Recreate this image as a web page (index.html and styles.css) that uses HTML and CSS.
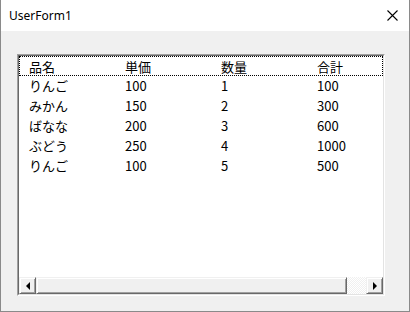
FILE: index.html
```html
<!DOCTYPE html>
<html lang="ja">
<head>
    <meta charset="UTF-8">
    <title>UserForm1</title>
    <link rel="stylesheet" href="styles.css">
</head>
<body>
    <div class="window">
        <div class="titlebar">
            <span class="title">UserForm1</span>
            <span class="close">
                <svg width="11" height="11" viewBox="0 0 11 11">
                    <path d="M0.5 0.5 L10.5 10.5 M10.5 0.5 L0.5 10.5" stroke="#000" stroke-width="1.1" fill="none"/>
                </svg>
            </span>
        </div>
        <div class="client">
            <div class="listbox">
                <div class="listbox-inner">
                    <div class="row header">
                        <span>品名</span><span>単価</span><span>数量</span><span>合計</span>
                    </div>
                    <div class="row"><span>りんご</span><span>100</span><span>1</span><span>100</span></div>
                    <div class="row"><span>みかん</span><span>150</span><span>2</span><span>300</span></div>
                    <div class="row"><span>ばなな</span><span>200</span><span>3</span><span>600</span></div>
                    <div class="row"><span>ぶどう</span><span>250</span><span>4</span><span>1000</span></div>
                    <div class="row"><span>りんご</span><span>100</span><span>5</span><span>500</span></div>
                    <div class="spacer"></div>
                    <div class="hscroll">
                        <div class="sbtn"><span class="arrow-left"></span></div>
                        <div class="thumb"></div>
                        <div class="track"></div>
                        <div class="sbtn"><span class="arrow-right"></span></div>
                    </div>
                </div>
            </div>
        </div>
    </div>
</body>
</html>
```

FILE: styles.css
```css
* {
    box-sizing: border-box;
}

body {
    margin: 0;
    width: 410px;
    height: 312px;
    overflow: hidden;
    font-family: "Noto Sans", "Noto Sans CJK JP", sans-serif;
}

.window {
    width: 410px;
    height: 312px;
    display: flex;
    flex-direction: column;
    border: 1px solid #8a8a8a;
    border-top: none;
    background-color: #f0f0f0;
}

.titlebar {
    height: 31px;
    display: flex;
    align-items: center;
    justify-content: space-between;
    background-color: #fff;
    padding: 0 10px 0 8px;
}

.title {
    font-size: 12px;
    color: #000;
}

.close {
    display: flex;
    margin-right: 1px;
}

.client {
    flex: 1;
    padding: 23px 0 0 16px;
}

.listbox {
    width: 368px;
    height: 242px;
    border: 1px solid;
    border-color: #a0a0a0 #fff #fff #a0a0a0;
}

.listbox-inner {
    height: 100%;
    display: flex;
    flex-direction: column;
    background-color: #fff;
    border: 1px solid;
    border-color: #696969 #e3e3e3 #e3e3e3 #696969;
}

.row {
    height: 20px;
    display: grid;
    grid-template-columns: 96px 96px 96px 1fr;
    align-items: center;
    padding-left: 10px;
    font-family: "Noto Sans CJK JP", sans-serif;
    font-size: 13px;
    color: #000;
    line-height: 20px;
}

.header {
    border: 1px dotted #000;
    padding-left: 9px;
}

.spacer {
    flex: 1;
}

.hscroll {
    height: 17px;
    display: flex;
    background-color: #f0f0f0;
}

.sbtn,
.thumb {
    height: 17px;
    border: 1px solid;
    border-color: #f0f0f0 #696969 #696969 #f0f0f0;
    box-shadow: inset 1px 1px #fff, inset -1px -1px #a0a0a0;
    background-color: #f0f0f0;
}

.sbtn {
    width: 17px;
    display: flex;
    align-items: center;
    justify-content: center;
}

.thumb {
    width: 311px;
}

.track {
    flex: 1;
    background: repeating-conic-gradient(#f0f0f0 0 25%, #fff 0 50%) 0 0 / 2px 2px;
}

.arrow-left {
    width: 0;
    height: 0;
    border-top: 4px solid transparent;
    border-bottom: 4px solid transparent;
    border-right: 4px solid #000;
}

.arrow-right {
    width: 0;
    height: 0;
    border-top: 4px solid transparent;
    border-bottom: 4px solid transparent;
    border-left: 4px solid #000;
}
```
